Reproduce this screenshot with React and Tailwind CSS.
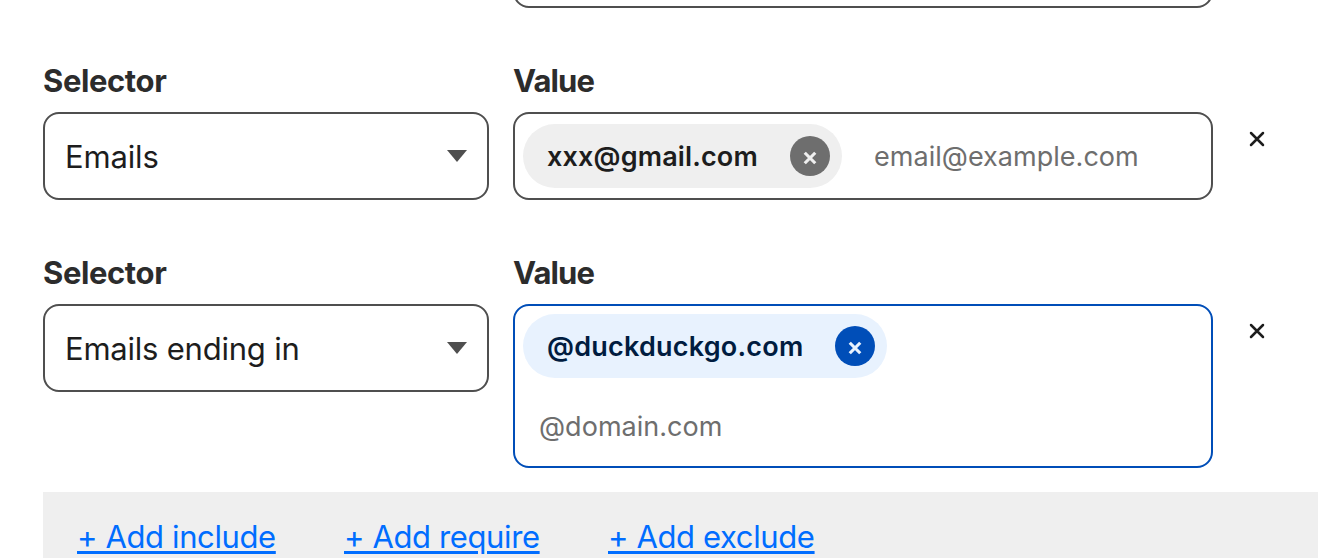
const Cross = ({ className, width = 2, cap = "round" }) => (
  <svg viewBox="0 0 16 16" className={className} fill="none" stroke="currentColor" strokeWidth={width} strokeLinecap={cap}>
    <path d="M2 2 14 14M14 2 2 14" />
  </svg>
);

const Label = ({ children, className }) => (
  <div className={`h-[36px] text-[31px] leading-[36px] font-bold text-[#2c2c2c] whitespace-nowrap ${className}`}>
    {children}
  </div>
);

const Select = ({ children, className }) => (
  <button type="button" className="mt-[13px] flex h-[88px] w-full items-center justify-between rounded-[16px] border-2 border-[#4f4f4f] bg-white pl-5 pr-5 text-left text-[31px] leading-[36px] text-[#1d1d1d]">
    <span className={`pt-0.5 whitespace-nowrap ${className}`}>{children}</span>
    <svg viewBox="0 0 20 12" className="h-3 w-5 fill-[#4f4f4f]"><path d="M0 0H20L10 12Z" /></svg>
  </button>
);

const Chip = ({ children, className, textClass, buttonClass }) => (
  <div className={`flex h-16 shrink-0 items-center justify-between rounded-full pl-6 pr-3 ${className}`}>
    <span className={`pt-0.5 text-[27px] leading-[36px] font-semibold whitespace-nowrap ${textClass}`}>{children}</span>
    <button type="button" aria-label="Remove value" className={`flex size-10 items-center justify-center rounded-full pt-1 ${buttonClass}`}>
      <Cross className="size-[14px]" width={3.6} cap="butt" />
    </button>
  </div>
);

const RemoveRow = () => (
  <button type="button" aria-label="Remove row" className="ml-[36px] mt-[68px] h-[16px] w-[16px] text-[#1d1d1d]">
    <Cross className="size-4" width={2.5} />
  </button>
);

const AddLink = ({ children, href, className }) => (
  <a href={href} className={`tracking-[-0.38px] underline decoration-[3px] underline-offset-[3px] ${className}`}>
    {children}
  </a>
);

export default function App() {
  return (
    <main className="flex h-[558px] w-[1318px] flex-col overflow-hidden bg-white pl-[43px] font-['Inter',sans-serif]">
      <div className="ml-[470px] h-2 w-[700px] shrink-0 overflow-hidden">
        <div className="-mt-20 h-[88px] rounded-[16px] border-2 border-[#4f4f4f]" />
      </div>

      <section className="mt-[55px] flex h-[137px] shrink-0 items-start">
        <div className="w-[446px]">
          <Label className="tracking-[-0.4px]">Selector</Label>
          <Select className="tracking-[-0.15px]">Emails</Select>
        </div>
        <div className="ml-6 w-[700px]">
          <Label className="tracking-[-0.9px]">Value</Label>
          <div className="mt-[13px] flex h-[88px] items-center rounded-[16px] border-2 border-[#4f4f4f] pl-2">
            <Chip className="w-[319px] bg-[#efefef]" textClass="text-[#1d1d1d] tracking-[0.15px]" buttonClass="bg-[#6e6e6e] text-[#efefef]">xxx@gmail.com</Chip>
            <span className="ml-8 pt-0.5 text-[27px] leading-[36px] whitespace-nowrap text-[#6e6e6e] tracking-[0.03px]">email@example.com</span>
          </div>
        </div>
        <RemoveRow />
      </section>

      <section className="mt-[55px] flex h-[213px] shrink-0 items-start">
        <div className="w-[446px]">
          <Label className="tracking-[-0.4px]">Selector</Label>
          <Select className="tracking-[-0.22px]">Emails ending in</Select>
        </div>
        <div className="ml-6 w-[700px]">
          <Label className="tracking-[-0.9px]">Value</Label>
          <div className="mt-[13px] flex h-[164px] flex-col items-start rounded-[16px] border-2 border-[#004eb8] pl-2 pt-2">
            <Chip className="w-[364px] bg-[#e8f2fe]" textClass="text-[#001c40] tracking-[0.22px]" buttonClass="bg-[#004eb8] text-[#e8f2fe]">@duckduckgo.com</Chip>
            <span className="ml-4 mt-[31px] text-[27px] leading-[36px] whitespace-nowrap text-[#6e6e6e] tracking-[0.03px]">@domain.com</span>
          </div>
        </div>
        <RemoveRow />
      </section>

      <footer className="mt-6 flex h-[66px] shrink-0 items-start bg-[#efefef] pl-[34px] pt-[27px] text-[31px] leading-[36px] whitespace-nowrap text-[#006dff]">
        <AddLink href="#include" className="w-[267px]">+ Add include</AddLink>
        <AddLink href="#require" className="w-[264px]">+ Add require</AddLink>
        <AddLink href="#exclude">+ Add exclude</AddLink>
      </footer>
    </main>
  );
}
